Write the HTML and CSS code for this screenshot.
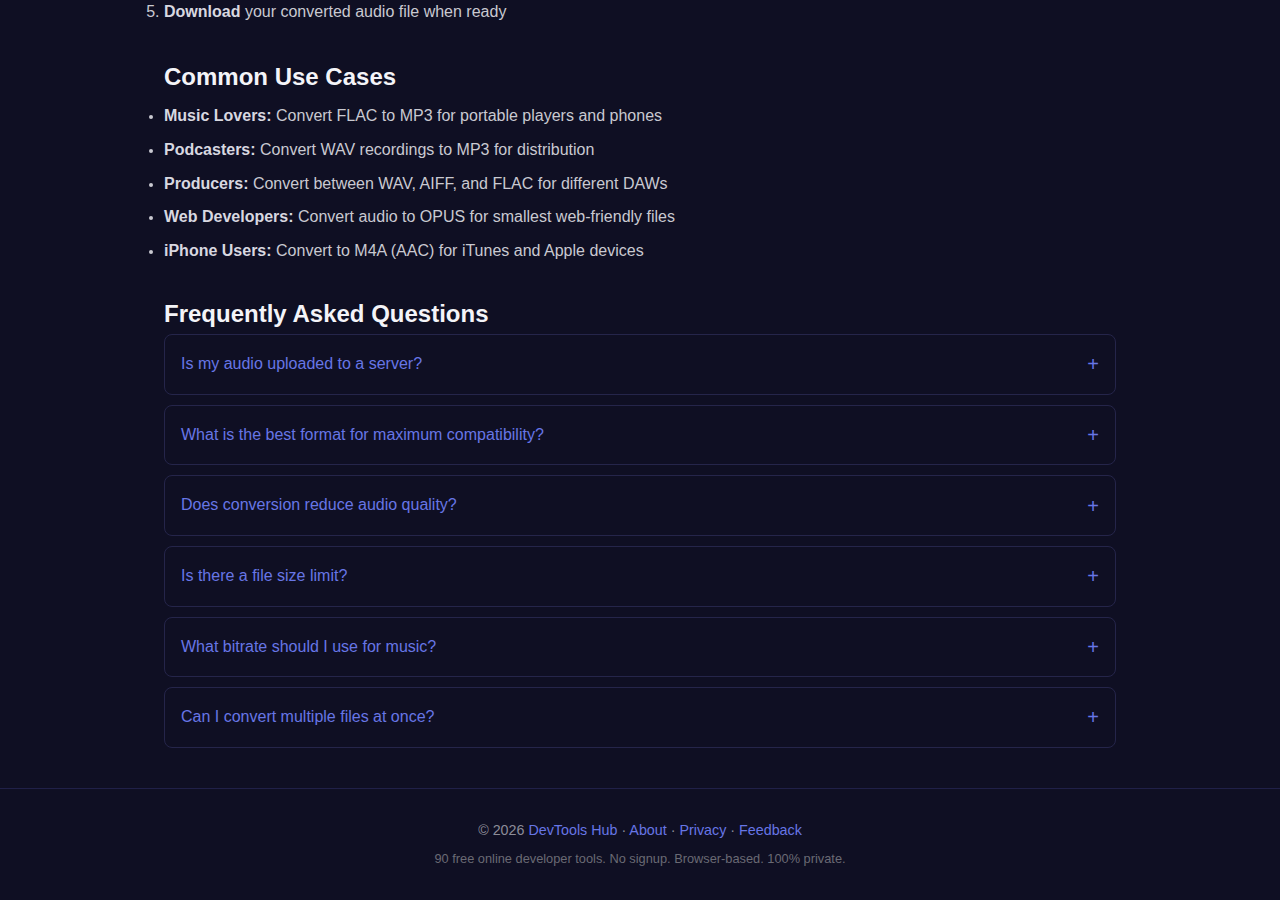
FILE: index.html
```html
<!DOCTYPE html>
<html lang="en">
<head>
  <meta charset="UTF-8" />
  <meta name="viewport" content="width=device-width, initial-scale=1.0"/>
  <title>Audio Converter - DevTools Hub</title>
  <link rel="stylesheet" href="styles.css">
</head>
<body>

  <main class="content">
    <!-- How to use (tail) -->
    <ol class="steps" start="5">
      <li><strong>Download</strong> your converted audio file when ready</li>
    </ol>

    <!-- Use cases -->
    <h2>Common Use Cases</h2>
    <ul class="uses">
      <li><strong>Music Lovers:</strong> Convert FLAC to MP3 for portable players and phones</li>
      <li><strong>Podcasters:</strong> Convert WAV recordings to MP3 for distribution</li>
      <li><strong>Producers:</strong> Convert between WAV, AIFF, and FLAC for different DAWs</li>
      <li><strong>Web Developers:</strong> Convert audio to OPUS for smallest web-friendly files</li>
      <li><strong>iPhone Users:</strong> Convert to M4A (AAC) for iTunes and Apple devices</li>
    </ul>

    <!-- FAQ -->
    <h2 class="faq-title">Frequently Asked Questions</h2>
    <div class="faq">
      <details class="faq-item">
        <summary>Is my audio uploaded to a server?<span class="plus">+</span></summary>
        <p>No. All conversion happens in your browser. Your files never leave your device.</p>
      </details>
      <details class="faq-item">
        <summary>What is the best format for maximum compatibility?<span class="plus">+</span></summary>
        <p>MP3 plays on virtually every device, player and browser.</p>
      </details>
      <details class="faq-item">
        <summary>Does conversion reduce audio quality?<span class="plus">+</span></summary>
        <p>Converting to a lossy format (MP3, AAC, OPUS) discards some data. Lossless formats keep everything.</p>
      </details>
      <details class="faq-item">
        <summary>Is there a file size limit?<span class="plus">+</span></summary>
        <p>Only your device memory. Very large files may take longer to process.</p>
      </details>
      <details class="faq-item">
        <summary>What bitrate should I use for music?<span class="plus">+</span></summary>
        <p>192 kbps is a good balance; 320 kbps for the best MP3 quality.</p>
      </details>
      <details class="faq-item">
        <summary>Can I convert multiple files at once?<span class="plus">+</span></summary>
        <p>Yes, add several files and they will be converted one after another.</p>
      </details>
    </div>
  </main>

  <footer class="site-footer">
    <p class="links">&copy; 2026 <a href="#">DevTools Hub</a> &middot; <a href="#">About</a> &middot; <a href="#">Privacy</a> &middot; <a href="#">Feedback</a></p>
    <p class="tagline">90 free online developer tools. No signup. Browser-based. 100% private.</p>
  </footer>

</body>
</html>
```

FILE: styles.css
```css
/* === GLOBAL === */
* {
  box-sizing: border-box;
  margin: 0;
  padding: 0;
}

body {
  background-color: #0f0f23;
  color: #c9c9d1;
  font-family: 'Liberation Sans', Arial, sans-serif;
  font-size: 16px;
  line-height: 1.6;
}

a {
  color: #6776e6;
  text-decoration: none;
}

.content {
  max-width: 1000px;
  margin: -1px auto 0;
  padding: 0 24px 30px;
}

h2 {
  color: #f4f4f8;
  font-size: 24px;
  line-height: 1.2;
  margin: 38px 0 12px;
}

strong {
  color: #d8d8e0;
}

/* === LISTS === */
.steps,
.uses {
  padding-left: 0;
}

.steps li,
.uses li {
  margin-bottom: 8px;
}

.uses li::marker {
  font-size: 14px;
}

/* === FAQ === */
.faq-title {
  margin: 37px 0 5px;
}

.faq-item {
  border: 1px solid #25254a;
  border-radius: 8px;
  margin-bottom: 10px;
}

.faq-item summary {
  display: flex;
  justify-content: space-between;
  align-items: center;
  padding: 20px 16px;
  line-height: 18.6px;
  color: #6776e6;
  cursor: pointer;
  list-style: none;
}

.faq-item summary::-webkit-details-marker {
  display: none;
}

.plus {
  font-size: 20px;
  line-height: 18px;
}

.faq-item p {
  padding: 0 16px 16px;
}

/* === FOOTER === */
.site-footer {
  border-top: 1px solid #202048;
  padding: 30px 20px 30px;
  text-align: center;
}

.site-footer .links {
  font-size: 14.3px;
  line-height: 22px;
  color: #8c8c98;
}

.site-footer .tagline {
  font-size: 12.8px;
  color: #6a6a74;
  margin-top: 8px;
}
```
